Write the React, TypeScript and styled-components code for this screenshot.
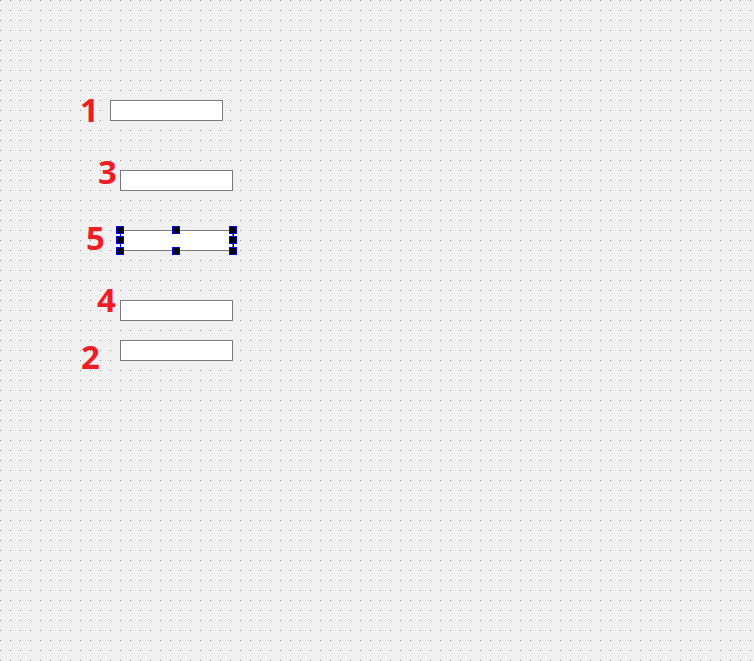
import React from "react";
import styled, { createGlobalStyle } from "styled-components";

const GlobalStyle = createGlobalStyle`
	html, body {
		margin: 0;
		padding: 0;
		background: #f0f0f0;
	}
	* {
		box-sizing: border-box;
	}
`;

// design surface with a dotted 10px grid
const Canvas = styled.div`
	position: relative;
	width: 754px;
	height: 661px;
	overflow: hidden;
	background-color: #f0f0f0;
	background-image: conic-gradient(
		from 90deg at 1px 1px,
		transparent 180deg,
		#8e8e8e 180deg 270deg,
		transparent 270deg
	);
	background-size: 10px 10px;
	background-position: 0 0;
	font-family: "Open Sans", "Noto Sans", sans-serif;
`;

interface PosProps {
	$x: number;
	$y: number;
}

const LineEdit = styled.div<PosProps>`
	position: absolute;
	left: ${(p) => p.$x}px;
	top: ${(p) => p.$y}px;
	width: 113px;
	height: 21px;
	background: #ffffff;
	border: 1px solid #7a7a7a;
`;

const Selection = styled.div<PosProps>`
	position: absolute;
	left: ${(p) => p.$x}px;
	top: ${(p) => p.$y}px;
	width: 114px;
	height: 22px;
	border-left: 1px solid #0000ff;
	border-right: 1px solid #0000ff;
`;

const Handle = styled.div<PosProps>`
	position: absolute;
	left: ${(p) => p.$x - 3}px;
	top: ${(p) => p.$y - 3}px;
	width: 6px;
	height: 6px;
	background: #000000;
	outline: 1px solid #0000ff;
	z-index: 2;
`;

const TabNumber = styled.span<PosProps>`
	position: absolute;
	left: ${(p) => p.$x}px;
	top: ${(p) => p.$y - 5}px;
	font-size: 33px;
	line-height: 1;
	font-weight: 700;
	color: #ee1c25;
`;

const fields = [
	{ n: 1, x: 110, y: 100, nx: 80, ny: 98 },
	{ n: 3, x: 120, y: 170, nx: 98, ny: 160 },
	{ n: 5, x: 120, y: 230, nx: 86, ny: 226 },
	{ n: 4, x: 120, y: 300, nx: 97, ny: 288 },
	{ n: 2, x: 120, y: 340, nx: 81, ny: 345 },
];

const handles = [
	[120, 230],
	[176, 230],
	[233, 230],
	[120, 240],
	[233, 240],
	[120, 251],
	[176, 251],
	[233, 251],
];

function App() {
	return (
		<>
			<GlobalStyle />
			<Canvas>
				{fields.map((f) => (
					<React.Fragment key={f.n}>
						<LineEdit $x={f.x} $y={f.y} />
						<TabNumber $x={f.nx} $y={f.ny}>
							{f.n}
						</TabNumber>
					</React.Fragment>
				))}
				<Selection $x={120} $y={230} />
				{handles.map(([x, y], i) => (
					<Handle key={i} $x={x} $y={y} />
				))}
			</Canvas>
		</>
	);
}

export default App;
